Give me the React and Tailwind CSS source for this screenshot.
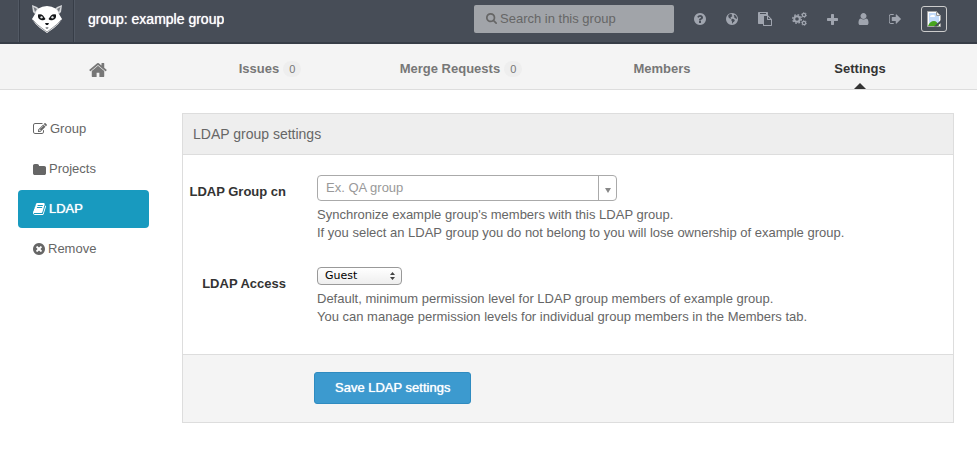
import React, { useState } from 'react';

const circle = 'M1664 896q0 209-103 385.5t-279.5 279.5-385.5 103-385.5-103-279.5-279.5-103-385.5 103-385.5 279.5-279.5 385.5-103 385.5 103 279.5 279.5 103 385.5z';

const icons = {
  home: {
    box: '64 253 1664 1283',
    d: 'M1472 992v480q0 26-19 45t-45 19h-384v-384h-256v384h-384q-26 0-45-19t-19-45v-480q0-1 .5-3t.5-3l575-474 575 474q1 2 1 6zm223-69l-62 74q-8 9-21 11h-3q-13 0-21-7l-692-577-692 577q-12 8-24 7-13-2-21-11l-62-74q-8-10-7-23.5t11-21.5l719-599q32-26 76-26t76 26l244 204v-195q0-14 9-23t23-9h192q14 0 23 9t9 23v408l219 182q10 8 11 21.5t-7 23.5z',
  },
  search: {
    box: '64 128 1664 1664',
    d: 'M1216 832q0-185-131.5-316.5t-316.5-131.5-316.5 131.5-131.5 316.5 131.5 316.5 316.5 131.5 316.5-131.5 131.5-316.5zm512 832q0 52-38 90t-90 38q-54 0-90-38l-343-342q-179 124-399 124-143 0-273.5-55.5t-225-150-150-225-55.5-273.5 55.5-273.5 150-225 225-150 273.5-55.5 273.5 55.5 225 150 150 225 55.5 273.5q0 220-124 399l343 343q37 37 37 90z',
  },
  help: {
    box: '128 128 1536 1536',
    d: 'M1024 1376v-192q0-14-9-23t-23-9h-192q-14 0-23 9t-9 23v192q0 14 9 23t23 9h192q14 0 23-9t9-23zm256-672q0-88-55.5-163t-138.5-116-170-41q-243 0-371 213-15 24 8 42l132 100q7 6 19 6 16 0 25-12 53-68 86-92 34-24 86-24 48 0 85.5 26t37.5 59q0 38-20 61t-68 45q-63 28-115.5 86.5t-52.5 125.5v36q0 14 9 23t23 9h192q14 0 23-9t9-23q0-19 21.5-49.5t54.5-49.5q32-18 49-28.5t46-35 44.5-48 28-60.5 12.5-81z' + circle,
  },
  globe: {
    box: '128 128 1536 1536',
    d: 'M560 300L800 256L900 330L850 430L960 500L850 600L760 640L700 760L800 830L760 900L640 840L500 760L440 600L400 470ZM850 900L1000 860L1180 960L1260 1060L1160 1240L1040 1320L960 1500L900 1400L900 1200L800 1050ZM1180 360L1320 400L1480 620L1540 820L1420 900L1300 760L1160 700L1200 560L1120 480Z' + circle,
  },
  paste: {
    box: '0 0 1792 1792',
    d: 'M768 1664h896v-640h-416q-40 0-68-28t-28-68v-416h-384v1152zm256-1440v-64q0-13-9.5-22.5t-22.5-9.5h-704q-13 0-22.5 9.5t-9.5 22.5v64q0 13 9.5 22.5t22.5 9.5h704q13 0 22.5-9.5t9.5-22.5zm256 672h299l-299-299v299zm512 128v672q0 40-28 68t-68 28h-960q-40 0-68-28t-28-68v-160h-544q-40 0-68-28t-28-68v-1344q0-40 28-68t68-28h1088q40 0 68 28t28 68v328q21 13 36 28l408 408q28 28 48 76t20 88z',
  },
  plus: {
    box: '192 128 1408 1408',
    d: 'M1600 736v192q0 40-28 68t-68 28h-416v416q0 40-28 68t-68 28h-192q-40 0-68-28t-28-68v-416h-416q-40 0-68-28t-28-68v-192q0-40 28-68t68-28h416v-416q0-40 28-68t68-28h192q40 0 68 28t28 68v416h416q40 0 68 28t28 68z',
  },
  user: {
    box: '256 128 1280 1536',
    d: 'M1536 1399q0 109-62.5 187t-150.5 78h-854q-88 0-150.5-78t-62.5-187q0-85 8.5-160.5t31.5-152 58.5-131 94-89 134.5-34.5q131 128 313 128t313-128q76 0 134.5 34.5t94 89 58.5 131 31.5 152 8.5 160.5zm-256-887q0 159-112.5 271.5t-271.5 112.5-271.5-112.5-112.5-271.5 112.5-271.5 271.5-112.5 271.5 112.5 112.5 271.5z',
  },
  signOut: {
    box: '32 256 1536 1280',
    d: 'M640 1440q0 4 1 20t.5 26.5-3 23.5-10 19.5-20.5 6.5h-320q-119 0-203.5-84.5t-84.5-203.5v-704q0-119 84.5-203.5t203.5-84.5h320q13 0 22.5 9.5t9.5 22.5q0 4 1 20t.5 26.5-3 23.5-10 19.5-20.5 6.5h-320q-66 0-113 47t-47 113v704q0 66 47 113t113 47h312l11.5 1 11.5 3 8 5.5 7 9 2 13.5zm928-544q0 26-19 45l-544 544q-19 19-45 19t-45-19-19-45v-288h-448q-26 0-45-19t-19-45v-384q0-26 19-45t45-19h448v-288q0-26 19-45t45-19 45 19l544 544q19 19 19 45z',
  },
  edit: {
    box: '0 128 1792 1536',
    d: 'M888 1184l116-116-152-152-116 116v56h96v96h56zm440-720q-16-16-33 1l-350 350q-17 17-1 33t33-1l350-350q17-17 1-33zm80 594v190q0 119-84.5 203.5t-203.5 84.5h-832q-119 0-203.5-84.5t-84.5-203.5v-832q0-119 84.5-203.5t203.5-84.5h832q63 0 117 25 15 7 18 23 3 17-9 29l-49 49q-14 14-32 8-23-6-45-6h-832q-66 0-113 47t-47 113v832q0 66 47 113t113 47h832q66 0 113-47t47-113v-126q0-13 9-22l64-64q15-15 35-7t20 29zm-96-738l288 288-672 672h-288v-288zm444 132l-92 92-288-288 92-92q28-28 68-28t68 28l152 152q28 28 28 68t-28 68z',
  },
  folder: {
    box: '64 128 1664 1408',
    d: 'M1728 608v704q0 92-66 158t-158 66h-1216q-92 0-158-66t-66-158v-960q0-92 66-158t158-66h320q92 0 158 66t66 158v32h672q92 0 158 66t66 158z',
  },
  book: {
    box: '64 128 1664 1536',
    d: 'M1703 478q40 57 18 129l-275 906q-19 64-76.5 107.5t-122.5 43.5h-923q-77 0-148.5-53.5t-99.5-131.5q-24-67-2-127 0-4 3-27t4-37q1-8-3-21.5t-3-19.5q2-11 8-21t16.5-23.5 16.5-23.5q23-38 45-91.5t30-91.5q3-10 .5-30t-.5-28q3-11 17-28t17-23q21-36 42-92t25-90q1-9-2.5-32t.5-28q4-13 22-30.5t22-22.5q19-26 42.5-84.5t27.5-96.5q1-8-3-25.5t-2-26.5q2-8 9-18t18-23 17-21q8-12 16.5-30.5t15-35 16-36 19.5-32 26.5-23.5 36-11.5 47.5 5.5l-1 3q38-9 51-9h761q74 0 114 56t18 130l-274 906q-36 119-71.5 153.5t-128.5 34.5h-869q-27 0-38 15-11 16-1 43 24 70 144 70h923q29 0 56-15.5t35-41.5l300-987q7-22 5-57 38 15 59 43zm-1064 2q-4 13 2 22.5t20 9.5h608q13 0 25.5-9.5t16.5-22.5l21-64q4-13-2-22.5t-20-9.5h-608q-13 0-25.5 9.5t-16.5 22.5zm-83 256q-4 13 2 22.5t20 9.5h608q13 0 25.5-9.5t16.5-22.5l21-64q4-13-2-22.5t-20-9.5h-608q-13 0-25.5 9.5t-16.5 22.5z',
  },
  remove: {
    box: '128 128 1536 1536',
    d: 'M1277 1122q0-26-19-45l-181-181 181-181q19-19 19-45 0-27-19-46l-90-90q-19-19-46-19-26 0-45 19l-181 181-181-181q-19-19-45-19-27 0-46 19l-90 90q-19 19-19 46 0 26 19 45l181 181-181 181q-19 19-19 45 0 27 19 46l90 90q19 19 46 19 26 0 45-19l181-181 181 181q19 19 45 19 27 0 46-19l90-90q19-19 19-46z' + circle,
  },
};

const Icon = ({ name, className }) => (
  <svg viewBox={icons[name].box} className={`shrink-0 ${className}`} fill="currentColor" fillRule="evenodd" aria-hidden="true">
    <path d={icons[name].d} />
  </svg>
);

const Cogs = () => (
  <svg viewBox="0 0 15 14" className="h-3.5 w-[15px]" fill="none" stroke="currentColor" aria-hidden="true">
    <circle cx="5" cy="7" r="2.8" strokeWidth="2" />
    <circle cx="5" cy="7" r="4.3" strokeWidth="1.4" strokeDasharray="1.7 1.677" />
    <circle cx="12" cy="3" r="1.7" strokeWidth="1.3" />
    <circle cx="12" cy="3" r="2.6" strokeWidth="0.7" strokeDasharray="1.3 1.42" />
    <circle cx="12" cy="11" r="1.7" strokeWidth="1.3" />
    <circle cx="12" cy="11" r="2.6" strokeWidth="0.7" strokeDasharray="1.3 1.42" />
  </svg>
);

const Logo = () => (
  <svg viewBox="0 0 30 28" className="h-7 w-[30px]" aria-hidden="true">
    <path d="M0 0L5 2L7 4L3 9L1 7Z M30 0L25 2L23 4L27 9L29 7Z" fill="#d5d7da" />
    <path d="M1.5 2L5 4L3 7Z M28.5 2L25 4L27 7Z" fill="#777b82" />
    <path d="M15 1Q20 1 23.5 3.5Q26 6 27 9L30 14Q27 19 22 23L15 28L8 23Q3 19 0 14L3 9Q4 6 6.5 3.5Q10 1 15 1Z" fill="#fff" />
    <path d="M1 15Q4 19 9 22.5L15 27L21 22.5Q26 19 29 15" fill="none" stroke="#96999e" strokeWidth="1" />
    <path d="M6 9.5Q9 8.5 11 10.5L13.5 14Q12 16 9 15Q5.500 14 6 9.500Z M24 9.500Q21 8.500 19 10.500L16.500 14Q18 16 21 15Q24.500 14 24 9.500Z" fill="#15171a" />
    <path d="M8 12L10 11L11 13L9 13.500Z M22 12L20 11L19 13L21 13.500Z" fill="#e8eaec" />
    <path d="M13 18H17L16 20H14Z" fill="#15171a" />
    <path d="M13.500 22H16.500L16 24H14Z" fill="#9a9c9f" />
  </svg>
);

const BrokenImage = () => (
  <svg viewBox="0 0 14 16" className="h-4 w-3.5" aria-hidden="true">
    <path d="M0.5 0.5H9.5L13.5 4.5V15.5H0.5Z" fill="#fff" stroke="#a5a5a5" />
    <path d="M2 2H9V5H12V14H2Z" fill="#c3dbfa" />
    <path d="M3 6Q3 4 5 4Q8 3 8 6Z" fill="#fff" />
    <path d="M9.5 0.5V4.5H13.5Z" fill="#eee" stroke="#999" />
    <path d="M1 15Q3 10 7 10Q10 10 12 15Z" fill="#47a51f" />
    <path d="M14 9L7 15.500H9.500L14 12Z" fill="#474d57" />
  </svg>
);

const iconLinks = [
  { label: 'Help', icon: <Icon name="help" className="size-3" /> },
  { label: 'Public area', icon: <Icon name="globe" className="size-3" /> },
  { label: 'Snippets', icon: <Icon name="paste" className="size-3.5" /> },
  { label: 'Admin area', icon: <Cogs /> },
  { label: 'New project', icon: <Icon name="plus" className="size-[11px]" /> },
  { label: 'Profile', icon: <Icon name="user" className="h-3 w-[11px]" /> },
  { label: 'Sign out', icon: <Icon name="signOut" className="h-2.5 w-3" /> },
];

const tabs = [
  { label: 'Issues', count: 0 },
  { label: 'Merge Requests', count: 0 },
  { label: 'Members' },
  { label: 'Settings', active: true },
];

const sideItems = [
  { label: 'Group', icon: 'edit', size: 'h-3 w-3.5' },
  { label: 'Projects', icon: 'folder', size: 'h-[11px] w-[13px]' },
  { label: 'LDAP', icon: 'book', size: 'h-3 w-[13px]', active: true },
  { label: 'Remove', icon: 'remove', size: 'size-3' },
];

const Header = () => (
  <header className="flex h-11 items-center gap-5 border-b-2 border-[#373d47] bg-[#474d57] pr-[30px] pl-[19px]">
    <div className="flex min-w-0 flex-1 items-center self-stretch">
      <a href="#" aria-label="Dashboard" className="flex w-[55px] items-center justify-center self-stretch border-x border-[#373d47] pb-1 shadow-[-1px_0_0_#525964,1px_0_0_#525964]">
        <Logo />
      </a>
      <h1 className="ml-3.5 truncate pb-1 text-sm leading-5 text-white [text-shadow:0_0_1px_#fff]">group: example group</h1>
    </div>
    <form className="relative mb-1" onSubmit={(e) => e.preventDefault()}>
      <Icon name="search" className="pointer-events-none absolute top-2 left-3 size-[11px] text-[#666]" />
      <input
        type="search"
        aria-label="Search in this group"
        placeholder="Search in this group"
        className="block h-7 w-[200px] rounded-xs bg-[#a1a4a9] pr-2 pb-0.5 pl-[26px] text-[13px] text-[#444] outline-none placeholder:text-[#666]"
      />
    </form>
    {iconLinks.map((link) => (
      <a key={link.label} href="#" aria-label={link.label} className="mb-1 text-[#a0a5af]">
        {link.icon}
      </a>
    ))}
    <a href="#" aria-label="Your profile" className="mb-1 flex size-[26px] items-center justify-center rounded-[3px] border border-[#ccc]">
      <BrokenImage />
    </a>
  </header>
);

const Tabs = () => (
  <nav className="grid h-[46px] grid-cols-[158fr_186fr_196fr_206fr_190fr] border-b border-[#ddd] bg-[#f4f4f4] pr-[22px] pl-[19px] text-[13px] font-bold text-[#777]">
    <a href="#" aria-label="Home" className="flex items-center justify-center pt-1.5">
      <Icon name="home" className="h-3.5 w-[18px]" />
    </a>
    {tabs.map((tab) => (
      <a key={tab.label} href="#" className={`relative flex items-center justify-center gap-1 pt-1 ${tab.active ? 'text-[#333]' : ''}`}>
        {tab.label}
        {tab.count !== undefined && (
          <span className="rounded-full bg-[#eee] px-1.5 text-[11px] leading-4 font-normal">{tab.count}</span>
        )}
        {tab.active && (
          <span className="absolute bottom-0 left-1/2 -translate-x-1/2 border-x-6 border-b-6 border-x-transparent border-b-[#333]" />
        )}
      </a>
    ))}
  </nav>
);

const Sidebar = () => (
  <nav className="flex w-[131px] shrink-0 flex-col gap-0.5 text-[13px]">
    {sideItems.map((item) => (
      <a
        key={item.label}
        href="#"
        className={`flex h-[38px] items-center gap-[3px] rounded px-[15px] ${item.active ? 'bg-[#189abf] text-white [text-shadow:0_0_1px_#fff]' : 'text-[#666]'}`}
      >
        <Icon name={item.icon} className={item.size} />
        {item.label}
      </a>
    ))}
  </nav>
);

const App = () => {
  const [groupCn, setGroupCn] = useState('');
  const [access, setAccess] = useState('Guest');

  return (
    <div className="min-h-screen bg-white font-['Liberation_Sans',Arial,sans-serif]">
      <Header />
      <Tabs />
      <main className="flex items-start gap-[33px] pr-[23px] pb-11 pl-[18px]">
        <div className="pt-5">
          <Sidebar />
        </div>
        <form className="mt-[23px] min-w-0 flex-1 border border-[#ddd] text-[13px] text-[#666]" onSubmit={(e) => e.preventDefault()}>
          <h2 className="border-b border-[#ddd] bg-[#eee] px-2.5 py-2.5 text-sm leading-5">LDAP group settings</h2>

          <div className="flex flex-col gap-[25px] pt-5 pb-7">
            <div className="flex gap-[31px]">
              <label htmlFor="ldap-cn" className="w-[103px] shrink-0 pt-2 text-right leading-[18px] font-bold text-[#333]">
                LDAP Group cn
              </label>
              <div className="min-w-0">
                <div className="relative w-[300px]">
                  <select
                    id="ldap-cn"
                    value={groupCn}
                    onChange={(e) => setGroupCn(e.target.value)}
                    className="block h-[26px] w-full appearance-none rounded border border-[#aaa] bg-white pl-2 text-[13px] text-[#999] outline-none"
                  >
                    <option value="">Ex. QA group</option>
                  </select>
                  <span className="pointer-events-none absolute inset-y-0 right-0 flex w-[19px] items-center justify-center border-l border-[#aaa] pt-1">
                    <span className="border-x-3 border-t-5 border-x-transparent border-t-[#888]" />
                  </span>
                </div>
                <p className="mt-[5px] leading-[18px]">
                  Synchronize example group's members with this LDAP group.
                  <br />
                  If you select an LDAP group you do not belong to you will lose ownership of example group.
                </p>
              </div>
            </div>

            <div className="flex gap-[31px]">
              <label htmlFor="ldap-access" className="w-[103px] shrink-0 pt-2 text-right leading-[18px] font-bold text-[#333]">
                LDAP Access
              </label>
              <div className="min-w-0">
                <div className="relative w-[85px]">
                  <select
                    id="ldap-access"
                    value={access}
                    onChange={(e) => setAccess(e.target.value)}
                    className="block h-[18px] w-full appearance-none rounded border border-[#999] bg-linear-to-b from-white to-[#eee] pl-[7px] font-['DejaVu_Sans',sans-serif] text-[11px] leading-4 text-black outline-none"
                  >
                    <option>Guest</option>
                    <option>Reporter</option>
                    <option>Developer</option>
                    <option>Master</option>
                    <option>Owner</option>
                  </select>
                  <svg viewBox="0 0 5 8" className="pointer-events-none absolute top-[5px] right-[7px] h-2 w-[5px]" fill="#444" aria-hidden="true">
                    <path d="M0 3L2.5 0L5 3ZM0 5L2.5 8L5 5Z" />
                  </svg>
                </div>
                <p className="mt-[5px] leading-[18px]">
                  Default, minimum permission level for LDAP group members of example group.
                  <br />
                  You can manage permission levels for individual group members in the Members tab.
                </p>
              </div>
            </div>
          </div>

          <div className="border-t border-[#ddd] bg-[#f4f4f4] pt-[17px] pb-[18px] pl-[131px]">
            <button type="submit" className="h-8 rounded-[3px] border border-[#2f8bc0] bg-[#3c9acf] px-5 text-[13px] text-white [text-shadow:0_0_1px_#fff]">
              Save LDAP settings
            </button>
          </div>
        </form>
      </main>
    </div>
  );
};

export default App;
